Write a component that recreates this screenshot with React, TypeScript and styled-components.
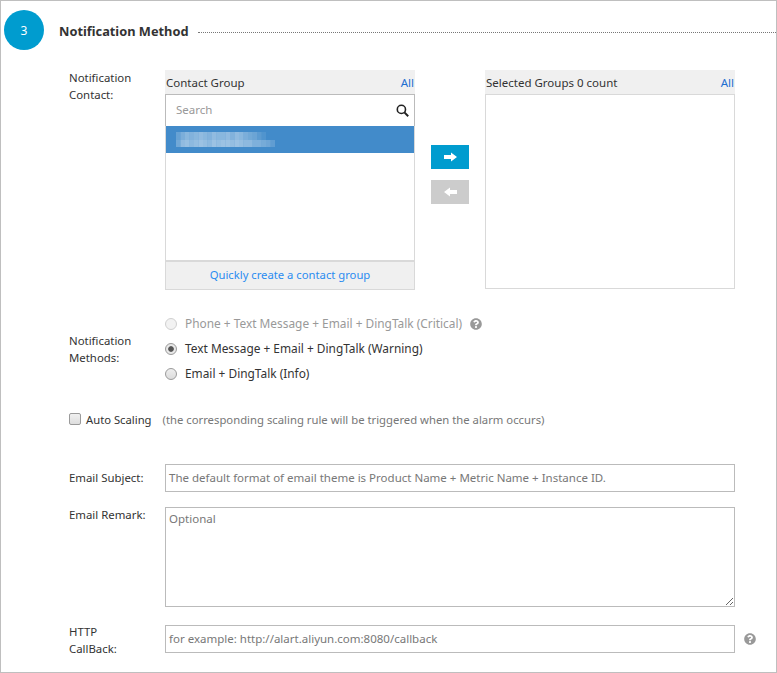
import React from "react";
import styled, { createGlobalStyle } from "styled-components";
import { FaQuestionCircle } from "react-icons/fa";

const GlobalStyle = createGlobalStyle`
  html, body { margin: 0; padding: 0; background: #fff; }
  body { font-family: "Noto Sans", "DejaVu Sans", sans-serif; font-size: 12px; color: #333; }
  * { box-sizing: border-box; }
`;

const Page = styled.div`
  width: 777px;
  height: 673px;
  border: 1px solid #bfbfbf;
  overflow: hidden;
`;

const Header = styled.div`
  display: flex;
  align-items: center;
  height: 40px;
  margin: 9px 0 0 3px;
`;

const StepBadge = styled.div`
  width: 40px;
  height: 40px;
  border-radius: 50%;
  background: #009ccf;
  color: #fff;
  display: flex;
  align-items: center;
  justify-content: center;
  font-size: 12px;
`;

const Title = styled.h3`
  margin: 2px 0 0 15px;
  font-size: 12.8px;
  font-weight: 700;
  color: #333;
  white-space: nowrap;
`;

const TitleRule = styled.div`
  flex: 1;
  margin: 4px 0 0 9px;
  border-top: 1px dotted #777;
`;

const Row = styled.div<{ $top: number; $center?: boolean }>`
  display: flex;
  align-items: ${(p) => (p.$center ? "center" : "flex-start")};
  margin-top: ${(p) => p.$top}px;
  padding-left: 68px;
`;

const Label = styled.div<{ $lift?: number }>`
  width: 96px;
  flex-shrink: 0;
  font-size: 11.4px;
  line-height: 17px;
  padding-right: 14px;
  margin-top: ${(p) => p.$lift ?? 0}px;
`;

const Transfer = styled.div`
  display: flex;
`;

const Panel = styled.div`
  width: 250px;
`;

const PanelHead = styled.div`
  display: flex;
  justify-content: space-between;
  align-items: center;
  height: 24px;
  padding: 0 1px;
  font-size: 11.5px;
  background: #f0f0f0;
`;

const AllLink = styled.a`
  color: #1e6fd0;
`;

const ListBox = styled.div`
  height: 166px;
  border: 1px solid #d9d9d9;
  border-top: none;
  border-bottom: none;
`;

const SearchBar = styled.div`
  display: flex;
  align-items: center;
  justify-content: space-between;
  height: 32px;
  margin: 0 -1px;
  padding: 0 5px 0 10px;
  font-size: 11.5px;
  border: 1px solid #bbb;
  border-bottom: none;
  color: #999;
  background: #fff;
`;

const SearchText = styled.span`
  margin-bottom: 2px;
`;

const SelectedItem = styled.div`
  display: flex;
  align-items: center;
  height: 27px;
  padding-left: 10px;
  background: #428bca;
`;

const PanelFoot = styled.div`
  display: flex;
  align-items: center;
  justify-content: center;
  height: 30px;
  padding-bottom: 3px;
  font-size: 11.25px;
  border: 1px solid #d9d9d9;
  border-top-width: 2px;
  background: #f0f0f0;
  color: #2a8cf0;
`;

const EmptyList = styled.div`
  height: 195px;
  border: 1px solid #d9d9d9;
  background: #fff;
`;

const Shuttle = styled.div`
  width: 70px;
  display: flex;
  flex-direction: column;
  align-items: center;
  gap: 11px;
  padding-top: 75px;
`;

const ShuttleButton = styled.button<{ $active?: boolean }>`
  width: 38px;
  height: 24px;
  padding: 0;
  border: none;
  display: flex;
  align-items: center;
  justify-content: center;
  background: ${(p) => (p.$active ? "#009ccf" : "#cccccc")};
`;

const Methods = styled.div`
  display: flex;
  flex-direction: column;
  font-size: 11.88px;
`;

const MethodRow = styled.div<{ $disabled?: boolean }>`
  display: flex;
  align-items: center;
  height: 25px;
  color: ${(p) => (p.$disabled ? "#999" : "#333")};
`;

const MethodText = styled.span`
  margin-bottom: 2px;
`;

const RadioDot = styled.span<{ $checked?: boolean; $disabled?: boolean }>`
  width: 12px;
  height: 12px;
  margin-right: 8px;
  border-radius: 50%;
  border: 1px solid ${(p) => (p.$disabled ? "#d0d0d0" : "#9a9a9a")};
  background: ${(p) =>
    p.$checked
      ? "radial-gradient(circle, #555 0 2.4px, #e8e8e8 3.2px)"
      : p.$disabled
        ? "#f2f2f2"
        : "linear-gradient(#eee, #dcdcdc)"};
`;

const Help = styled(FaQuestionCircle)`
  color: #999;
  width: 12px;
  height: 12px;
`;

const MethodHelp = styled(Help)`
  margin-left: 8px;
`;

const CheckBox = styled.span`
  width: 12px;
  height: 12px;
  margin-right: 5px;
  border: 1px solid #9a9a9a;
  border-radius: 2px;
  background: linear-gradient(#f0f0f0, #dedede);
`;

const CheckLine = styled.div`
  display: flex;
  align-items: center;
  height: 20px;
  padding-bottom: 2px;
  font-size: 11.25px;
`;

const Hint = styled.span`
  margin-left: 11px;
  font-size: 11.3px;
  color: #777;
`;

const TextField = styled.div`
  width: 570px;
  height: 28px;
  display: flex;
  align-items: center;
  padding: 0 0 2px 3px;
  font-size: 11.5px;
  border: 1px solid #bbb;
  color: #777;
  background: #fff;
`;

const TextArea = styled.textarea`
  display: block;
  width: 570px;
  height: 100px;
  padding: 3px 3px;
  border: 1px solid #bbb;
  border-radius: 0;
  outline: none;
  font: inherit;
  font-size: 11.5px;
  &::placeholder { color: #777; opacity: 1; }
`;

const FieldHelp = styled(Help)`
  margin-left: 9px;
`;

const Mosaic = () => {
  const cols = 22;
  const top = [0.2, 0.3, 0.38, 0.34, 0.38, 0.42, 0.38, 0.34, 0.42, 0.38, 0.38, 0.42, 0.34, 0.42, 0.38, 0.3, 0.26, 0.22, 0.14, 0.08, 0, 0];
  const bottom = [0.25, 0.42, 0.46, 0.4, 0.44, 0.48, 0.44, 0.4, 0.48, 0.44, 0.48, 0.48, 0.44, 0.48, 0.44, 0.4, 0.4, 0.32, 0.32, 0.28, 0.24, 0.16];
  return (
    <svg width={cols * 4.5} height={18} viewBox={`0 0 ${cols * 4.5} 18`}>
      {top.map((o, i) => (
        <rect key={`t${i}`} x={i * 4.5} y={1} width={4.5} height={8} fill="#fff" opacity={o} />
      ))}
      {bottom.map((o, i) => (
        <rect key={`b${i}`} x={i * 4.5} y={9} width={4.5} height={7} fill="#fff" opacity={o} />
      ))}
    </svg>
  );
};

const Arrow = ({ flip }: { flip?: boolean }) => (
  <svg width="13" height="10" viewBox="0 0 13 10" style={flip ? { transform: "scaleX(-1)" } : undefined}>
    <path d="M0 3h7V0.5L13 5l-6 4.5V7H0z" fill="#fff" />
  </svg>
);

const SearchIcon = () => (
  <svg width="13" height="13" viewBox="0 0 13 13" fill="none" stroke="#222" strokeWidth="1.6">
    <circle cx="5.4" cy="5.4" r="4.1" />
    <path d="M8.4 8.4l3.8 3.8" strokeWidth="2" />
  </svg>
);

export default function App() {
  return (
    <Page>
      <GlobalStyle />
      <Header>
        <StepBadge>3</StepBadge>
        <Title>Notification Method</Title>
        <TitleRule />
      </Header>

      <Row $top={20}>
        <Label $lift={-1}>Notification Contact:</Label>
        <Transfer>
          <Panel>
            <PanelHead>
              <span>Contact Group</span>
              <AllLink>All</AllLink>
            </PanelHead>
            <ListBox>
              <SearchBar>
                <SearchText>Search</SearchText>
                <SearchIcon />
              </SearchBar>
              <SelectedItem>
                <Mosaic />
              </SelectedItem>
            </ListBox>
            <PanelFoot>Quickly create a contact group</PanelFoot>
          </Panel>
          <Shuttle>
            <ShuttleButton $active>
              <Arrow />
            </ShuttleButton>
            <ShuttleButton>
              <Arrow flip />
            </ShuttleButton>
          </Shuttle>
          <Panel>
            <PanelHead>
              <span>Selected Groups 0 count</span>
              <AllLink>All</AllLink>
            </PanelHead>
            <EmptyList />
          </Panel>
        </Transfer>
      </Row>

      <Row $top={21} $center>
        <Label>Notification Methods:</Label>
        <Methods>
          <MethodRow $disabled>
            <RadioDot $disabled />
            <MethodText>Phone + Text Message + Email + DingTalk (Critical)</MethodText>
            <MethodHelp />
          </MethodRow>
          <MethodRow>
            <RadioDot $checked />
            <MethodText>Text Message + Email + DingTalk (Warning)</MethodText>
          </MethodRow>
          <MethodRow>
            <RadioDot />
            <MethodText>Email + DingTalk (Info)</MethodText>
          </MethodRow>
        </Methods>
      </Row>

      <Row $top={24}>
        <CheckLine>
          <CheckBox />
          Auto Scaling
          <Hint>(the corresponding scaling rule will be triggered when the alarm occurs)</Hint>
        </CheckLine>
      </Row>

      <Row $top={34} $center>
        <Label $lift={-2}>Email Subject:</Label>
        <TextField>The default format of email theme is Product Name + Metric Name + Instance ID.</TextField>
      </Row>

      <Row $top={15}>
        <Label $lift={-1}>Email Remark:</Label>
        <TextArea placeholder="Optional" />
      </Row>

      <Row $top={14} $center>
        <Label $lift={2}>
          HTTP
          <br />
          CallBack:
        </Label>
        <TextField>for example: http://alart.aliyun.com:8080/callback</TextField>
        <FieldHelp />
      </Row>
    </Page>
  );
}
